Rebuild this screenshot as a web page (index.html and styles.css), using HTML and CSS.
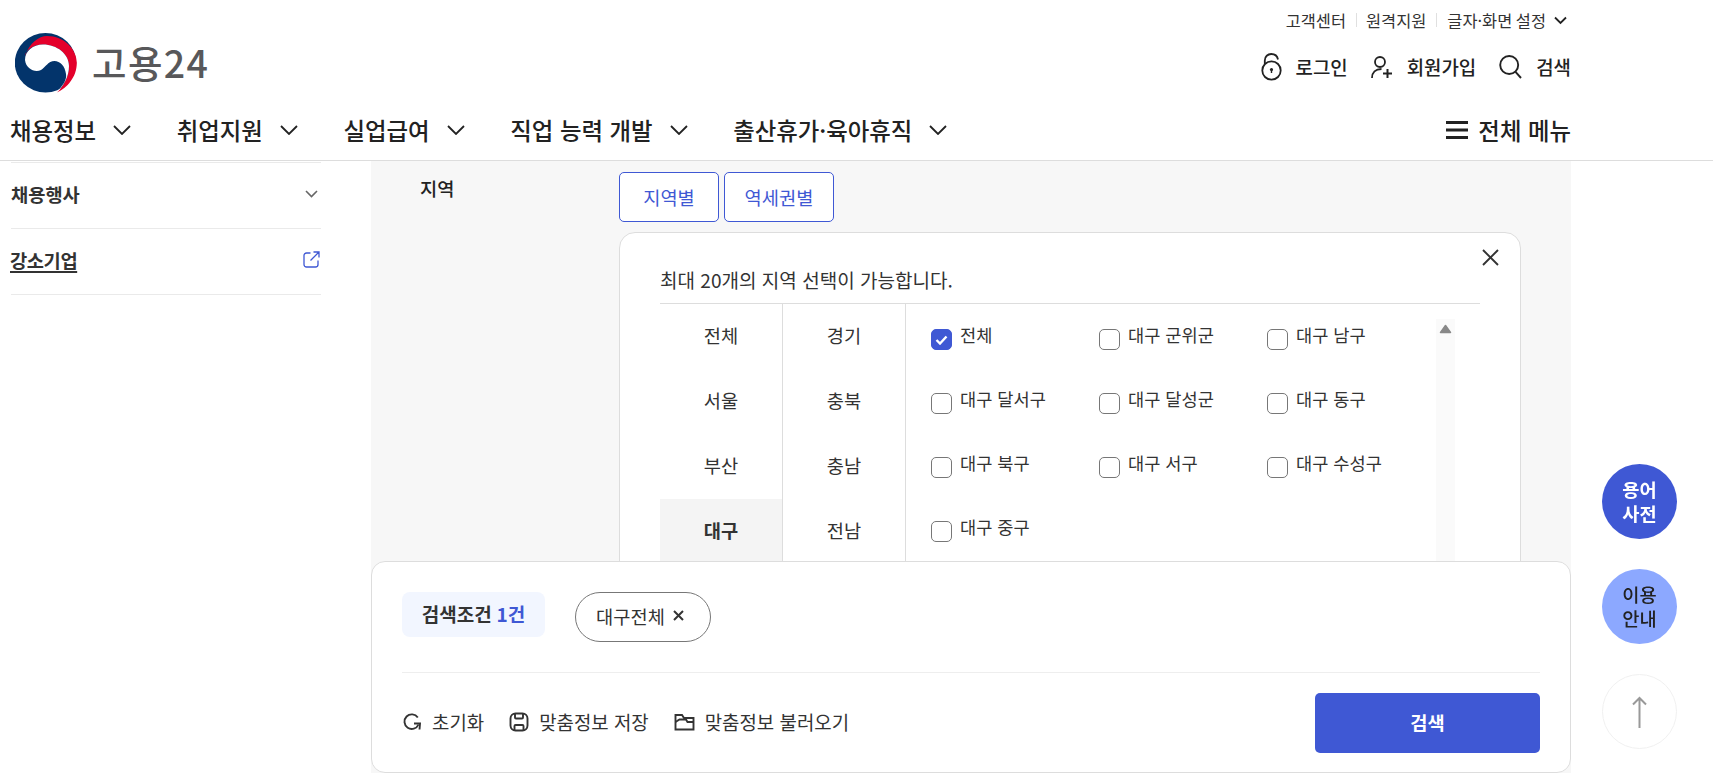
FILE: index.html
```html
<!DOCTYPE html>
<html lang="ko">
<head>
<meta charset="utf-8">
<title>고용24</title>
<link rel="stylesheet" href="styles.css">
</head>
<body>
<header class="site-header">
  <div class="header-top">
    <a class="logo">
      <svg class="logo-mark" viewBox="0 0 62 60" width="62" height="60">
        <ellipse cx="30.5" cy="29.8" rx="30.7" ry="29.8" fill="#03346b"/>
        <path fill="#e4002b" d="M10 23C14 10 24 3 32 3C49 3 61.800 16 61.800 30C61.800 44 52 55 42 59.500C49 53 54 43 54 33C54 21 42 11.500 28 11.500C18 11.500 10 18 10 23Z"/>
        <path fill="#fff" d="M10 27C10 18 18 11.500 28 11.500C42 11.500 54 21 54 33C54 43 49 53 42 59C48 52 52 47 51 41C50 33 45 28 39.500 28C33 28 31 34 26 37C20 40 11 36 10 27Z"/>
      </svg>
      <span class="logo-text">고용24</span>
    </a>
    <div class="header-right">
      <div class="top-links">
        <a>고객센터</a><i class="sep sep-a"></i><a>원격지원</a><i class="sep"></i><a class="with-chev"><span class="set-text">글자·화면 설정</span>
          <svg width="13" height="9" viewBox="0 0 13 9"><path d="M1 1.500L6.500 7L12 1.500" fill="none" stroke="#222" stroke-width="1.800"/></svg></a>
      </div>
      <div class="util-links">
        <a class="util">
          <svg width="21" height="28" viewBox="0 0 21 28" fill="none" stroke="#222" stroke-width="1.800"><circle cx="10.500" cy="17.500" r="9.200"/><path d="M3.800 11V7.500C3.800 3.500 6.800 1 10.200 1C13.600 1 16.400 3.200 17 6.500"/><circle cx="10.500" cy="16.500" r="1.600" fill="#222" stroke="none"/><path d="M10.500 17v3" stroke-width="1.400"/></svg>
          로그인</a>
        <a class="util">
          <svg width="22" height="22" viewBox="0 0 22 22" fill="none" stroke="#222" stroke-width="1.800"><circle cx="9" cy="6" r="5"/><path d="M1 22C1 16.500 4.500 13 10.500 13"/><path d="M12 17.500h9M16.500 13v9" stroke-width="2"/></svg>
          회원가입</a>
        <a class="util">
          <svg width="23" height="24" viewBox="0 0 23 24" fill="none" stroke="#222" stroke-width="1.900"><circle cx="10.200" cy="10" r="9"/><path d="M16.500 16.800L22 23"/></svg>
          검색</a>
      </div>
    </div>
  </div>
  <nav class="gnb">
    <a class="gnb-item">채용정보<svg class="chev" viewBox="0 0 18 10" width="18" height="10"><path d="M1 1l8 8l8-8"/></svg></a>
    <a class="gnb-item">취업지원<svg class="chev" viewBox="0 0 18 10" width="18" height="10"><path d="M1 1l8 8l8-8"/></svg></a>
    <a class="gnb-item">실업급여<svg class="chev" viewBox="0 0 18 10" width="18" height="10"><path d="M1 1l8 8l8-8"/></svg></a>
    <a class="gnb-item">직업 능력 개발<svg class="chev" viewBox="0 0 18 10" width="18" height="10"><path d="M1 1l8 8l8-8"/></svg></a>
    <a class="gnb-item">출산휴가·육아휴직<svg class="chev" viewBox="0 0 18 10" width="18" height="10"><path d="M1 1l8 8l8-8"/></svg></a>
    <a class="all-menu"><svg width="22" height="18" viewBox="0 0 22 18" fill="none" stroke="#222" stroke-width="2.800"><path d="M0 1.500h22M0 9h22M0 16.500h22"/></svg>전체 메뉴</a>
  </nav>
</header>

<main class="layout">
  <aside class="side">
    <a class="side-item strong">채용행사<svg width="13" height="8" viewBox="0 0 13 8"><path d="M1 1l5.500 5.500L12 1" fill="none" stroke="#666" stroke-width="1.600"/></svg></a>
    <a class="side-item strong link"><span class="underlined">강소기업</span><svg width="17" height="17" viewBox="0 0 17 17" fill="none" stroke="#3f58d4" stroke-width="1.300"><path d="M7.500 2H3.500A2.500 2.500 0 0 0 1 4.500V13.500A2.500 2.500 0 0 0 3.500 16H12.500A2.500 2.500 0 0 0 15 13.500V9.500"/><path d="M7.500 9.500L16 1M10.500 1H16V6.500"/></svg></a>
  </aside>

  <section class="panel">
    <div class="form-row">
      <div class="form-label">지역</div>
      <div class="form-body">
        <div class="tabs">
          <button class="tab tab-a">지역별</button>
          <button class="tab tab-b">역세권별</button>
        </div>
        <div class="dialog">
          <button class="close" aria-label="닫기"><svg width="17" height="17" viewBox="0 0 17 17" fill="none" stroke="#333" stroke-width="1.900"><path d="M1 1l15 15M16 1L1 16"/></svg></button>
          <p class="dialog-msg">최대 20개의 지역 선택이 가능합니다.</p>
          <div class="picker">
            <ul class="col">
              <li>전체</li><li>서울</li><li>부산</li><li class="on">대구</li>
            </ul>
            <ul class="col">
              <li>경기</li><li>충북</li><li>충남</li><li>전남</li>
            </ul>
            <div class="checks-wrap">
              <div class="checks">
                <label class="check"><i class="box checked"><svg width="13" height="10" viewBox="0 0 13 10"><path d="M1.500 5l3.500 3.500L11.500 1.500" fill="none" stroke="#fff" stroke-width="2.400"/></svg></i>전체</label>
                <label class="check"><i class="box"></i>대구 군위군</label>
                <label class="check"><i class="box"></i>대구 남구</label>
                <label class="check"><i class="box"></i>대구 달서구</label>
                <label class="check"><i class="box"></i>대구 달성군</label>
                <label class="check"><i class="box"></i>대구 동구</label>
                <label class="check"><i class="box"></i>대구 북구</label>
                <label class="check"><i class="box"></i>대구 서구</label>
                <label class="check"><i class="box"></i>대구 수성구</label>
                <label class="check"><i class="box"></i>대구 중구</label>
              </div>
              <div class="scrollbar"><svg class="tri" width="13" height="10" viewBox="0 0 13 10"><path d="M6.500 1.500L11.500 8.500H1.500Z" fill="#888" stroke="#888" stroke-width="1.500" stroke-linejoin="round"/></svg></div>
            </div>
          </div>
        </div>
      </div>
    </div>
  </section>
</main>

<div class="search-bar">
  <div class="cond-row">
    <div class="cond-badge">검색조건 <b>1건</b></div>
    <div class="chip">대구전체<svg width="11" height="11" viewBox="0 0 11 11" fill="none" stroke="#333" stroke-width="2"><path d="M1 1l9 9M10 1l-9 9"/></svg></div>
  </div>
  <div class="action-row">
    <div class="actions">
      <a class="action act-1"><svg width="18" height="18" viewBox="0 0 18 18" fill="none" stroke="#333" stroke-width="1.900"><path d="M14.800 4.500A7.300 7.300 0 1 0 15.500 11.500"/><path d="M11 10.500h6l-.5 6"/></svg>초기화</a>
      <a class="action act-2"><svg width="20" height="20" viewBox="0 0 20 20" fill="none" stroke="#333" stroke-width="1.900"><rect x="1.500" y="1.500" width="17" height="17" rx="5"/><path d="M6 2v3.500a1 1 0 0 0 1 1h6a1 1 0 0 0 1-1V2M5.500 18v-4a1 1 0 0 1 1-1h7a1 1 0 0 1 1 1v4"/></svg>맞춤정보 저장</a>
      <a class="action act-3"><svg width="21" height="18" viewBox="0 0 21 18" fill="none" stroke="#333" stroke-width="1.900"><path d="M1.500 16.500V2h6.500l2 3h9.500v11.500z"/><path d="M1.500 9l4-2.500H12l1.500 2.500h6"/></svg>맞춤정보 불러오기</a>
    </div>
    <button class="search-btn">검색</button>
  </div>
</div>

<div class="floats">
  <a class="fab fab-dark">용어<br>사전</a>
  <a class="fab fab-light">이용<br>안내</a>
  <a class="fab fab-top"><svg width="15" height="32" viewBox="0 0 15 32" fill="none" stroke="#999" stroke-width="2"><path d="M7.500 2v30M1 8.500L7.500 2L14 8.500"/></svg></a>
</div>
</body>
</html>
```
FILE: styles.css
```css
* { box-sizing: border-box; }
html, body { margin: 0; height: 100%; overflow: hidden; background: #fff; }
body { font-family: "Noto Sans CJK KR", "Noto Sans", sans-serif; color: #222; }
ul { list-style: none; margin: 0; padding: 0; }
p { margin: 0; }
i { font-style: normal; }
button { font-family: inherit; cursor: pointer; }

.site-header { height: 161px; border-bottom: 1px solid #ddd; }
.header-top { width: 1571px; height: 108px; display: flex; justify-content: space-between; }
.logo { display: flex; align-items: flex-start; padding: 33px 0 0 15px; }
.logo-mark { flex: none; }
.logo-text { margin: -1px 0 0 15px; font-size: 37.5px; letter-spacing: 1.4px; line-height: 60px; font-weight: 500; color: #58585a; }
.header-right { display: flex; flex-direction: column; align-items: flex-end; }
.top-links { display: flex; align-items: center; height: 40px; font-size: 16.4px; color: #333; }
.top-links a { line-height: 40px; }
.sep { width: 1px; height: 14px; background: #e0e0e0; margin: 0 10px; }
.sep-a { margin: 0 9.5px; }
.with-chev { display: flex; align-items: center; gap: 8px; margin-right: 4px; }
.set-text { word-spacing: -1px; }
.util-links { display: flex; align-items: center; gap: 23px; height: 53px; }
.util { display: flex; align-items: center; gap: 14px; font-size: 18.9px; font-weight: 500; }

.gnb { width: 1571px; height: 52px; padding: 0 0 8px 10px; display: flex; align-items: center; }
.gnb-item { display: flex; align-items: center; gap: 17px; margin-right: 45.7px; font-size: 23.4px; font-weight: 500; }
.chev { flex: none; fill: none; stroke: #222; stroke-width: 1.8; }
.all-menu { margin-left: auto; display: flex; align-items: center; gap: 10px; font-size: 23.4px; font-weight: 500; }

.layout { display: flex; width: 1571px; height: 612px; padding-left: 11px; gap: 50px; }
.side { width: 310px; padding-top: 1px; }
.side-item { display: flex; align-items: center; justify-content: space-between; height: 66px; border-bottom: 1px solid #eaeaea; padding-right: 3px; padding-bottom: 4px; font-size: 18.7px; }
.side-item:first-child { height: 67px; border-top: 1px solid #eaeaea; }
.strong { font-weight: 700; color: #333; }
.side-item.link { padding-right: 1px; }
.underlined { letter-spacing: -0.4px; margin-left: -1px; text-decoration: underline; text-decoration-thickness: 2px; text-underline-offset: 3px; }

.panel { flex: 1; background: #f7f7f7; padding: 11px 50px 0 49px; }
.form-row { display: flex; }
.form-label { width: 199px; padding-top: 0; font-size: 18.7px; font-weight: 500; line-height: 32px; }
.form-body { flex: 1; }
.tabs { display: flex; gap: 5px; }
.tab { height: 50px; border: 1px solid #3f58d4; border-radius: 5px; background: #fff; color: #3f58d4; font-size: 18.7px; padding: 0 0 2px; }
.tab-a { width: 100px; }
.tab-b { width: 110px; }
.dialog { position: relative; margin-top: 10px; height: 420px; background: #fff; border: 1px solid #ddd; border-radius: 16px; padding: 34px 40px 0; }
.close { position: absolute; top: 16px; right: 21px; width: 17px; height: 17px; padding: 0; border: 0; background: none; line-height: 0; }
.dialog-msg { font-size: 19.05px; line-height: 26px; padding-bottom: 10px; border-bottom: 1px solid #ddd; height: 37px; color: #333; }
.picker { display: flex; }
.col { width: 123px; border-right: 1px solid #ddd; }
.col li { height: 65px; display: flex; align-items: center; justify-content: center; font-size: 18.7px; padding-bottom: 5px; color: #333; }
.col li.on { background: #f4f4f4; font-weight: 700; }
.checks-wrap { flex: 1; display: flex; padding-left: 25px; }
.checks { width: 505px; display: grid; grid-template-columns: repeat(3, 168px); grid-auto-rows: 64px; padding-top: 21px; }
.check { display: flex; align-items: flex-start; gap: 8px; font-size: 17.6px; line-height: 20px; color: #333; }
.box { flex: none; width: 21px; height: 21px; margin-top: 4px; border: 1px solid #777; border-radius: 5px; background: #fff; display: flex; align-items: center; justify-content: center; }
.box.checked { background: #3f58d4; border-color: #3f58d4; }
.scrollbar { width: 19px; margin-top: 15px; background: #fafafa; height: 260px; position: relative; }
.tri { position: absolute; top: 5px; left: 3px; }

.search-bar { position: fixed; left: 371px; top: 561px; width: 1200px; height: 212px; background: #fff; border: 1px solid #ddd; border-radius: 14px; padding: 30px 30px 0; }
.cond-row { display: flex; gap: 30px; height: 81px; border-bottom: 1px solid #eee; align-items: flex-start; }
.cond-badge { width: 143px; height: 45px; background: #f2f6ff; border-radius: 8px; display: flex; align-items: center; justify-content: center; gap: 5px; font-size: 19px; font-weight: 700; color: #333; padding-bottom: 3px; }
.cond-badge b { color: #3f58d4; font-weight: 700; }
.chip { width: 136px; height: 50px; border: 1px solid #777; border-radius: 25px; display: flex; align-items: center; justify-content: center; gap: 8px; font-size: 18.7px; color: #333; padding: 0 6px 3px 0; }
.action-row { display: flex; justify-content: space-between; align-items: flex-start; margin-top: 20px; }
.actions { display: flex; align-items: center; height: 60px; padding-bottom: 3px; }
.action { display: flex; align-items: center; font-size: 18.9px; color: #333; }
.act-1 { gap: 11px; margin-left: 1px; margin-right: 25px; }
.act-2 { gap: 10px; margin-right: 25px; }
.act-3 { gap: 10px; }
.search-btn { width: 225px; height: 60px; border: 0; border-radius: 5px; background: #3f58d4; color: #fff; font-size: 18.7px; font-weight: 700; padding: 0 0 3px; }

.floats { position: fixed; left: 1602px; top: 464px; display: flex; flex-direction: column; gap: 30px; }
.fab { width: 75px; height: 75px; border-radius: 50%; display: flex; align-items: center; justify-content: center; text-align: center; font-size: 18.7px; line-height: 24px; padding-bottom: 2px; }
.fab-dark { background: #3f58d4; color: #fff; font-weight: 700; }
.fab-light { background: #8ca8ff; color: #222; font-weight: 500; }
.fab-top { background: #fff; border: 1px solid #f0f0f0; padding-bottom: 0; }
```
